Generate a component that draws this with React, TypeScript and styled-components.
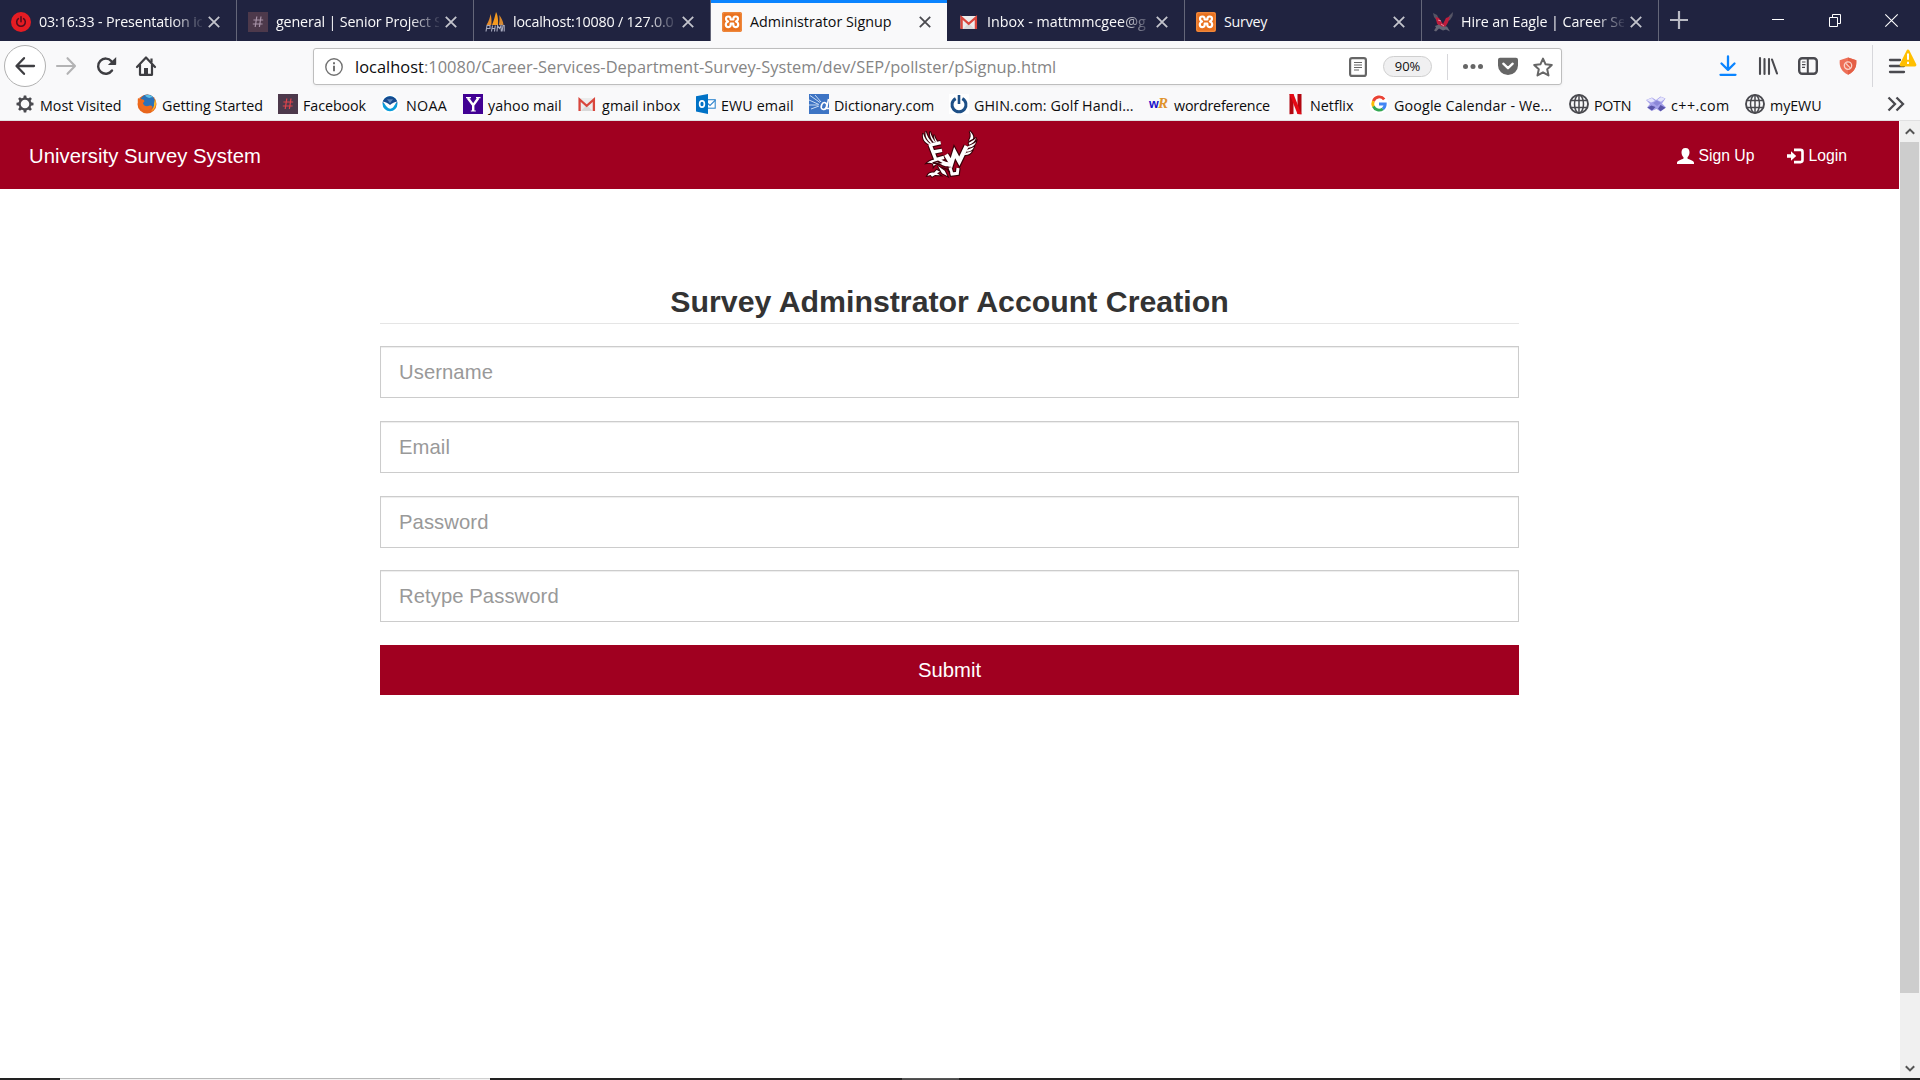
import React from "react";
import styled, { createGlobalStyle, css } from "styled-components";

const GlobalStyle = createGlobalStyle`
  * { box-sizing: border-box; }
  body { margin: 0; background: #fff; overflow: hidden; }
`;

const chromeFont = css`
  font-family: "Open Sans", "Noto Sans", sans-serif;
`;

const Screen = styled.div`
  width: 1920px;
  height: 1080px;
  display: flex;
  flex-direction: column;
  overflow: hidden;
  ${chromeFont}
`;

/* ---------- Tab strip ---------- */

const TabStrip = styled.header`
  height: 41px;
  flex: none;
  display: flex;
  background: #202340;
`;

const TabBox = styled.div<{ $active?: boolean }>`
  width: 237px;
  height: 41px;
  padding: 3px 16px 0 11px;
  display: flex;
  align-items: center;
  border-right: 1px solid ${(p) => (p.$active ? "#202340" : "#646679")};
  background: ${(p) => (p.$active ? "#f9f9fa" : "#202340")};
  color: ${(p) => (p.$active ? "#0c0c0d" : "#f9f9fa")};
  box-shadow: ${(p) => (p.$active ? "inset 0 3px 0 #0a84ff" : "none")};
`;

const TabTitle = styled.span<{ $track: number; $fade?: boolean }>`
  width: 163px;
  margin-left: 8px;
  margin-right: 6px;
  padding-bottom: 1px;
  font-size: 14.3px;
  line-height: 20px;
  letter-spacing: ${(p) => p.$track}px;
  white-space: nowrap;
  mask-image: ${(p) => (p.$fade ? "linear-gradient(to right, #000 134px, transparent 166px)" : "none")};
`;

const Icon = styled.svg`
  flex: none;
  display: block;
  overflow: visible;
`;

const NewTab = styled.div`
  width: 42px;
  padding: 11px 0 0 11px;
`;

const WindowButtons = styled.div`
  margin-left: auto;
  padding: 14px 22px 0 0;
  display: flex;
  gap: 44px;
`;

/* ---------- Navigation toolbar ---------- */

const Toolbar = styled.div`
  height: 50px;
  flex: none;
  display: flex;
  align-items: center;
  background: #f9f9fa;
`;

const BackButton = styled.div`
  width: 42px;
  height: 42px;
  margin-left: 4px;
  border-radius: 50%;
  border: 1px solid #b1b1b1;
  background: #fff;
  display: flex;
  align-items: center;
  justify-content: center;
`;

const NavIcons = styled.div`
  width: 267px;
  padding-left: 10px;
  display: flex;
  gap: 20px;
`;

const AddressBar = styled.div`
  width: 1249px;
  height: 37px;
  margin-top: 1px;
  padding: 0 7px 0 11px;
  display: flex;
  align-items: center;
  background: #fff;
  border: 1px solid #bebebe;
  border-radius: 3px;
  box-shadow: 0 1px 3px rgba(0, 0, 0, 0.06);
`;

const Url = styled.span`
  width: 994px;
  margin-left: 12px;
  font-size: 16.4px;
  line-height: 24px;
  letter-spacing: 0.03px;
  color: #858585;
  white-space: nowrap;
`;

const Host = styled.span`
  color: #0c0c0d;
`;

const ZoomPill = styled.span`
  width: 49px;
  height: 21px;
  margin: 0 15px 0 16px;
  border: 1px solid #cfcfcf;
  border-radius: 11px;
  background: #f0f0f1;
  color: #111;
  font-size: 13px;
  line-height: 19px;
  letter-spacing: -0.1px;
  text-align: center;
`;

const Divider = styled.span<{ $height: number }>`
  width: 1px;
  height: ${(p) => p.$height}px;
  background: #d7d7db;
`;

const PageActions = styled.div`
  margin-left: 15px;
  display: flex;
  align-items: center;
  gap: 15px;
`;

const Tools = styled.div`
  margin-left: 156px;
  padding-right: 14px;
  display: flex;
  gap: 20px;
`;

const MenuButton = styled.div`
  position: relative;
  margin-left: 16px;
`;

const Warning = styled.div`
  position: absolute;
  left: 10px;
  top: -7px;
`;

/* ---------- Bookmarks ---------- */

const Bookmarks = styled.nav`
  height: 30px;
  flex: none;
  padding: 3px 15px 0 15px;
  display: flex;
  background: #f9f9fa;
  border-bottom: 1px solid #e0e0e1;
`;

const Bookmark = styled.div<{ $width: number }>`
  width: ${(p) => p.$width}px;
  flex: none;
  display: flex;
  gap: 5px;
`;

const BookmarkLabel = styled.span<{ $track: number }>`
  font-size: 14.3px;
  line-height: 20px;
  padding-top: 2px;
  letter-spacing: ${(p) => p.$track}px;
  color: #0c0c0d;
  white-space: nowrap;
`;

const Overflow = styled.div`
  margin-left: auto;
`;

/* ---------- Page ---------- */

const Viewport = styled.div`
  flex: 1;
  display: flex;
  min-height: 0;
`;

const Page = styled.main`
  width: 1900px;
  background: #fff;
  font-family: "Liberation Sans", Arial, sans-serif;
`;

const SiteNav = styled.div`
  width: 1899px;
  height: 68px;
  padding: 0 29px;
  display: grid;
  grid-template-columns: 1fr 56px 1fr;
  align-items: center;
  background: #a00020;
  color: #fff;
`;

const Brand = styled.span`
  font-size: 20.25px;
  line-height: 24px;
  letter-spacing: 0.05px;
  padding-top: 2px;
`;

const NavLinks = styled.div`
  display: flex;
  justify-content: flex-end;
  padding: 2px 23px 0 0;
  gap: 33px;
`;

const NavLink = styled.a`
  display: flex;
  align-items: center;
  gap: 4px;
  color: #fff;
  font-size: 15.75px;
  line-height: 20px;
`;

const Form = styled.form`
  width: 1139px;
  margin: 93px 0 0 380px;
  display: flex;
  flex-direction: column;
`;

const Heading = styled.h2`
  margin: 0 0 22px;
  height: 42px;
  border-bottom: 1px solid #e5e5e5;
  font-size: 30.3px;
  line-height: 39px;
  font-weight: 700;
  color: #333;
  text-align: center;
`;

const Field = styled.input<{ $gap: number }>`
  height: 52px;
  margin: 0 0 ${(p) => p.$gap}px;
  padding: 0 18px;
  border: 1px solid #ccc;
  border-radius: 0;
  box-shadow: inset 0 1px 1px rgba(0, 0, 0, 0.075);
  font-family: inherit;
  font-size: 20.25px;
  letter-spacing: 0.07px;
  color: #555;
  outline: none;
  &::placeholder {
    color: #999;
    opacity: 1;
  }
`;

const Submit = styled.button`
  height: 50px;
  padding: 0;
  border: 0;
  background: #a00020;
  color: #fff;
  font-family: inherit;
  font-size: 20.25px;
`;

const Scrollbar = styled.div`
  width: 20px;
  background: #f0f0f0;
  display: flex;
  flex-direction: column;
  align-items: flex-start;
`;

const ScrollArrow = styled.div<{ $height: number }>`
  width: 19px;
  height: ${(p) => p.$height}px;
  display: flex;
  align-items: center;
  justify-content: center;
`;

const Thumb = styled.div`
  width: 19px;
  height: 851px;
  margin-bottom: auto;
  background: #cdcdcd;
`;

const TaskbarEdge = styled.footer`
  height: 2px;
  flex: none;
  display: flex;
  background: #222;
`;

const EdgeSegment = styled.div<{ $width: number; $line: string; $fill: string }>`
  width: ${(p) => p.$width}px;
  height: 2px;
  border-top: 1px solid ${(p) => p.$line};
  background: ${(p) => p.$fill};
`;

/* ---------- Favicons ---------- */

const Favicon = ({ children }: { children: React.ReactNode }) => (
  <Icon width="20" height="20" viewBox="0 0 20 20">{children}</Icon>
);

const PowerFavicon = () => (
  <Favicon>
    <circle cx="10" cy="10" r="10" fill="#e51c23" />
    <path d="M7.400 6.600a4.300 4.300 0 1 0 5.200 0M10 4.800v5" fill="none" stroke="#4d0d1c" strokeWidth="1.500" strokeLinecap="round" />
  </Favicon>
);

const HashFavicon = ({ color }: { color: string }) => (
  <Favicon>
    <rect width="20" height="20" fill="#4d394b" />
    <path d="M8.800 4.500 7.200 15M13 4.500 11.400 15M5.400 8h9.800M4.800 12h9.800" stroke={color} strokeWidth="1.200" fill="none" />
  </Favicon>
);

const PhpMyAdminFavicon = () => (
  <Favicon>
    <path d="M1.500 13C4 9 5 5 5.500 2c1 3 1.300 7 .8 11z" fill="#e78d2d" />
    <path d="M7 13C9 8 10 4 11 0c2 3 2.300 9 2 13z" fill="#f59a1f" />
    <path d="M13.800 13c.8-3 .8-6 .5-10 2 3 4 6 4.200 10z" fill="#d6882f" />
    <path d="M1 19.500l1-6h3v3H2M6.500 19.500l1-6M9.500 19.500l.8-6M7 16.500h3M12 19.500l.5-6 2 3 1.500-3 .3 6M17 19.500l1-6h1.200v6" fill="none" stroke="#a9acc0" strokeWidth="1.100" />
  </Favicon>
);

const XamppFavicon = () => (
  <Favicon>
    <rect width="20" height="20" rx="2" fill="#e9701d" />
    <rect x=".8" y=".8" width="18.400" height="18.400" rx="1.500" fill="none" stroke="#f39a55" strokeWidth=".8" />
    <path d="M6.300 4.500c-3 0-3 4-.2 5-3.200 1.200-3 5.700.2 5.700 2.300 0 2.500-2 2.400-3.500h2.600c-.1 1.500.1 3.500 2.400 3.500 3.200 0 3.400-4.500.2-5.700 2.800-1 2.800-5-.2-5-2 0-2.400 1.300-2.300 3H8.600c.1-1.700-.3-3-2.300-3z" fill="none" stroke="#fff" strokeWidth="2.200" strokeLinejoin="round" />
  </Favicon>
);

const GmailFavicon = () => (
  <Favicon>
    <rect x="1.500" y="4" width="16.500" height="13" rx="1" fill="#ececec" />
    <path d="M4 17l5.700-6 5.800 6z" fill="#d9d9d9" />
    <path d="M2.600 17V5.500l7.100 6.300 7.200-6.300V17" fill="none" stroke="#d9463c" strokeWidth="2.300" />
  </Favicon>
);

const EagleFavicon = () => (
  <Favicon>
    <path d="M0 1l4 2 3 6-3 0-3-4zM20 0l-4 4-3 6 4-2 2.500-4z" fill="#555565" />
    <path d="M2.500 5l3.500 1 4 6 3-6 4-1.500-2 6-3 5-5 0-3-4z" fill="#c01c3c" />
    <path d="M2 14l4-1.500 3 2 5 0 3 5-4-2-3 1-4-2-3 3-2-1 2-3z" fill="#666675" />
    <path d="M5 8l3 1M8 12l3 2" stroke="#e8b0bb" strokeWidth=".8" />
  </Favicon>
);

const GearIcon = () => (
  <Favicon>
    <circle cx="10" cy="10" r="5.400" fill="none" stroke="#4a4a4f" strokeWidth="2.200" />
    {[0, 45, 90, 135, 180, 225, 270, 315].map((a) => (
      <path key={a} d="M8.800 1.500h2.400l.6 3H8.200z" fill="#4a4a4f" transform={`rotate(${a} 10 10)`} />
    ))}
  </Favicon>
);

const FirefoxFavicon = () => (
  <Favicon>
    <circle cx="10" cy="10" r="9.500" fill="#e8661c" />
    <circle cx="10.500" cy="8" r="7.600" fill="#2a72b8" />
    <path d="M8 1.500c4-1 7 0 8.500 2-2-.5-3 .5-4 .5S9 3 8 1.500z" fill="#5fc0e8" />
    <path d="M1 4c1 .8 2.500 1 4 1.200 1.500.4 2.800 1 2.300 2.300-.6 1.200-1.500 1-1.200 2.300 1 2.500 4 3 5.900 2 2-.8 4 .2 3 1.700-2 3-6 3.500-9 2C2 13.500 0 9 1 4z" fill="#ee6a1c" />
    <path d="M18 5c2 5 .5 10-4 12.600 2-2 3.400-5 3-8z" fill="#fbc02d" />
  </Favicon>
);

const NoaaFavicon = () => (
  <Favicon>
    <circle cx="9" cy="10" r="9.300" fill="#fff" />
    <circle cx="9" cy="9.800" r="7.500" fill="#0b9ddb" />
    <path d="M1.600 8.500a7.500 7.500 0 0 1 14.800 0L9 14z" fill="#174a8f" />
    <path d="M1.500 7.500c3 .2 5.500 1.800 7.500 3.500 2-1.700 4.500-3.300 7.500-3.500-2.500 1.700-3.500 6.800-7 7.200-3.500 0-5.500-5-8-7.200z" fill="#fff" />
    <path d="M6 5.200h6l-3 4z" fill="#5d86bb" />
  </Favicon>
);

const YahooFavicon = () => (
  <Favicon>
    <rect width="20" height="20" fill="#410093" />
    <path d="M4.800 4l5.400 7.300L15.400 4M10.200 11v6" stroke="#fff" strokeWidth="2.400" fill="none" />
    <path d="M3 3.700h5M13 3.700h4.500M7.800 17h5" stroke="#fff" strokeWidth="1.200" />
  </Favicon>
);

const OutlookFavicon = () => (
  <Favicon>
    <rect x="9.500" y="5.700" width="9.700" height="8.500" fill="#fff" stroke="#3589cf" strokeWidth="1.100" />
    <path d="M10 8l4 3.500L19.500 6" fill="none" stroke="#3589cf" strokeWidth="1.100" />
    <path d="M0 2.200 12 0v20L0 17.600z" fill="#0072c6" />
    <ellipse cx="6" cy="10" rx="2.400" ry="3.100" fill="none" stroke="#fff" strokeWidth="1.600" />
  </Favicon>
);

const DictionaryFavicon = () => (
  <Favicon>
    <rect width="20" height="20" fill="#3d74c4" />
    <path d="M1 1.500l10 7M6 1l6 7M0 6l10 4.500M0 11h9M2 15l8-3" stroke="#c9dcf5" strokeWidth="1" fill="none" />
    <ellipse cx="15" cy="12" rx="2.600" ry="3.500" transform="rotate(20 15 12)" stroke="#fff" strokeWidth="1.600" fill="none" />
    <path d="M19.500 5l-2 9.500h2.500" stroke="#fff" strokeWidth="1.500" fill="none" />
  </Favicon>
);

const GhinFavicon = () => (
  <Favicon>
    <rect width="20" height="20" fill="#fff" />
    <path d="M6.700 4.600a7 7 0 1 0 6.600 0" fill="none" stroke="#1d4f86" strokeWidth="3" />
    <path d="M10 1v9" stroke="#1d4f86" strokeWidth="2.600" />
  </Favicon>
);

const WordReferenceFavicon = () => (
  <Favicon>
    <text x="0" y="14" fontFamily="Liberation Sans" fontWeight="700" fontSize="12.500" fill="#1a12c9">w</text>
    <text x="9" y="14" fontFamily="Liberation Serif" fontStyle="italic" fontWeight="700" fontSize="15" fill="#e0932b">R</text>
  </Favicon>
);

const NetflixFavicon = () => (
  <Favicon>
    <path d="M4.500 0h4v20l-4 .3zM12.500 0h4v20.300l-4-.3z" fill="#b20710" />
    <path d="M4.500 0h4l8 20.300-4-.3z" fill="#e50914" />
  </Favicon>
);

const GoogleFavicon = () => (
  <Favicon>
    <circle cx="10" cy="10" r="9.500" fill="#fff" />
    <g fill="none" strokeWidth="2.900">
      <path d="M15.200 5.300A6.200 6.200 0 0 0 4.400 7.300" stroke="#ea4335" />
      <path d="M4.400 7.200a6.200 6.200 0 0 0 0 5.300" stroke="#fbbc05" />
      <path d="M4.400 12.400a6.200 6.200 0 0 0 9.500 2.400" stroke="#34a853" />
      <path d="M10 10h6.200c0 2-.8 3.800-2.400 5" stroke="#4285f4" />
    </g>
  </Favicon>
);

const GlobeIcon = () => (
  <Favicon>
    <g fill="none" stroke="#4a4a4f">
      <circle cx="10" cy="10" r="9" strokeWidth="1.900" />
      <ellipse cx="10" cy="10" rx="4.500" ry="9" strokeWidth="1.500" />
      <path d="M10 1v18M1.800 6.500h16.400M1.800 13.500h16.400" strokeWidth="1.500" />
    </g>
  </Favicon>
);

const CppFavicon = () => (
  <Favicon>
    <path d="M0 6l6-2.500 4 2.500 4.500-3.500 5 2-3.500 5 4 4-5.500 4-4-2.500-5 2-4.500-3.500 3-3.500z" fill="#a5a0ea" />
    <path d="M.5 6l5.500-2L9 7 5 8.500zM11 6l4-3 4 1.700-4 3z" fill="#e6e6fc" />
    <path d="M1.500 13.500l4-2 4 1.500-3.500 3.500zM14.500 11l5 2.700-5 3.600-2.500-2.600z" fill="#5a55a8" />
    <path d="M7 9l4-2.500 4 2.500-4 3z" fill="#8c88d8" />
  </Favicon>
);

/* ---------- Browser glyphs ---------- */

const CloseGlyph = ({ color }: { color: string }) => (
  <Icon width="12" height="12" viewBox="0 0 12 12">
    <path d="M.8.8l10.400 10.400M11.200.8.8 11.200" stroke={color} strokeWidth="1.800" />
  </Icon>
);

const eagleStrokes = [
  { d: "M20 46 56 38M25 46 42 90M34 66 60 61M42 89 66 82", w: 10 },
  { d: "M72 74 88 100 98 68 112 94 134 48", w: 13 },
  { d: "M84 112 90 132 106 130 108 114", w: 9 },
];

const eagleShapes =
  "M3 10C1 25 6 36 18 42l6-1C13 33 8 24 3 10z" +
  "M11 4c-2 14 2 24 14 35l6-1C21 28 15 18 11 4z" +
  "M24 5c-1 13 3 23 11 32l5-1C33 27 28 18 24 5z" +
  "M36 14c0 8 2 15 5 22l5-1c-5-7-8-13-10-21z" +
  "M143 3c5 12 4 20-3 30l13-7c3-6-2-16-10-23z" +
  "M162 22c-4 10-14 11-22 17l2 5c10-4 18-10 20-22z" +
  "M162 36c-6 6-15 8-24 13l1 5c11-3 20-7 23-18z" +
  "M156 50c-6 5-14 6-22 10l-1 5c11 0 20-5 23-15z" +
  "M150 64c-8 3-14 3-22 7l-2 4c11 1 20-3 24-11z" +
  "M15 99c9-9 24-13 39-11 9 2 13 8 25 9 8 2 9 9 7 14-10-2-14 0-24-5-12-8-22-4-27 3 0-10-8-12-20-10z" +
  "M16 137c4-8 12-10 20-9l8-8 10 5-9 5 9 6-15-1-9 5-4-5z" +
  "M48 108l20 14 8 16-16-8z";

const ScreamingEagle = () => (
  <Icon width="56" height="50" viewBox="0 0 168 150">
    <g stroke="#3a0009" fill="none">
      {eagleStrokes.map((s) => (
        <path key={s.d} d={s.d} strokeWidth={s.w + 7} />
      ))}
      <path d={eagleShapes} strokeWidth="6" />
    </g>
    <g stroke="#fff" fill="none">
      {eagleStrokes.map((s) => (
        <path key={s.d} d={s.d} strokeWidth={s.w} />
      ))}
    </g>
    <path d={eagleShapes} fill="#fff" />
    <path d="M32 99l16-5 8 4-12 3zM58 112l18 6 8 10" fill="none" stroke="#3a0009" strokeWidth="4" />
  </Icon>
);

type Tab = { icon: React.ReactNode; title: string; track: number; fade?: boolean; active?: boolean };

const tabs: Tab[] = [
  { icon: <PowerFavicon />, title: "03:16:33 - Presentation ic", track: -0.14, fade: true },
  { icon: <HashFavicon color="#a893a8" />, title: "general | Senior Project S", track: -0.15, fade: true },
  { icon: <PhpMyAdminFavicon />, title: "localhost:10080 / 127.0.0", track: -0.2, fade: true },
  { icon: <XamppFavicon />, title: "Administrator Signup", track: 0, active: true },
  { icon: <GmailFavicon />, title: "Inbox - mattmmcgee@g", track: 0, fade: true },
  { icon: <XamppFavicon />, title: "Survey", track: -0.25 },
  { icon: <EagleFavicon />, title: "Hire an Eagle | Career Se", track: -0.08, fade: true },
];

type Mark = { icon: React.ReactNode; label: string; width: number; track: number };

const bookmarks: Mark[] = [
  { icon: <GearIcon />, label: "Most Visited", width: 122, track: 0 },
  { icon: <FirefoxFavicon />, label: "Getting Started", width: 141, track: 0 },
  { icon: <HashFavicon color="#e0444c" />, label: "Facebook", width: 103, track: -0.08 },
  { icon: <NoaaFavicon />, label: "NOAA", width: 82, track: 0.3 },
  { icon: <YahooFavicon />, label: "yahoo mail", width: 114, track: 0.05 },
  { icon: <GmailFavicon />, label: "gmail inbox", width: 119, track: 0.12 },
  { icon: <OutlookFavicon />, label: "EWU email", width: 113, track: 0.1 },
  { icon: <DictionaryFavicon />, label: "Dictionary.com", width: 140, track: 0 },
  { icon: <GhinFavicon />, label: "GHIN.com: Golf Handi...", width: 200, track: 0.09 },
  { icon: <WordReferenceFavicon />, label: "wordreference", width: 136, track: -0.2 },
  { icon: <NetflixFavicon />, label: "Netflix", width: 84, track: 0 },
  { icon: <GoogleFavicon />, label: "Google Calendar - We...", width: 200, track: 0.13 },
  { icon: <GlobeIcon />, label: "POTN", width: 77, track: -0.3 },
  { icon: <CppFavicon />, label: "c++.com", width: 99, track: 0.45 },
  { icon: <GlobeIcon />, label: "myEWU", width: 90, track: -0.1 },
];

const fields = [
  { name: "username", label: "Username", gap: 23 },
  { name: "email", label: "Email", gap: 23 },
  { name: "password", label: "Password", gap: 22 },
  { name: "confirm", label: "Retype Password", gap: 23 },
];

export default function App() {
  return (
    <Screen>
      <GlobalStyle />
      <TabStrip>
        {tabs.map((t) => (
          <TabBox key={t.title} $active={t.active}>
            {t.icon}
            <TabTitle $track={t.track} $fade={t.fade}>{t.title}</TabTitle>
            <CloseGlyph color={t.active ? "#4a4a4f" : "#c3c4cc"} />
          </TabBox>
        ))}
        <NewTab>
          <Icon width="18" height="18" viewBox="0 0 18 18">
            <path d="M9 0v18M0 9h18" stroke="#b9bac4" strokeWidth="2.200" />
          </Icon>
        </NewTab>
        <WindowButtons>
          <Icon width="13" height="13" viewBox="0 0 13 13">
            <path d="M0 5.500h12" stroke="#fff" />
          </Icon>
          <Icon width="12" height="13" viewBox="0 0 12 13">
            <path d="M.5 3.500h8v9h-8zM3.500 3.500v-3h8v9h-3" fill="none" stroke="#fff" />
          </Icon>
          <Icon width="13" height="13" viewBox="0 0 13 13">
            <path d="M.3.300l12.400 12.400M12.700.300.300 12.700" stroke="#fff" strokeWidth="1.100" />
          </Icon>
        </WindowButtons>
      </TabStrip>

      <Toolbar>
        <BackButton>
          <Icon width="20" height="18" viewBox="0 0 20 18">
            <path d="M9 1.200 1.500 9 9 16.800M2 9h17" fill="none" stroke="#3e3e42" strokeWidth="2.300" strokeLinecap="round" strokeLinejoin="round" />
          </Icon>
        </BackButton>
        <NavIcons>
          <Icon width="20" height="20" viewBox="0 0 20 20">
            <path d="M11.500 2.200 19 10l-7.500 7.800M18.500 10H1" fill="none" stroke="#b3b3b4" strokeWidth="2.100" strokeLinecap="round" strokeLinejoin="round" />
          </Icon>
          <Icon width="20" height="20" viewBox="0 0 20 20">
            <path d="M16 14.500A7.600 7.600 0 1 1 15.500 5.200" fill="none" stroke="#3e3e42" strokeWidth="2.400" strokeLinecap="round" />
            <path d="M20.200 1v7.200a.8.800 0 0 1-.8.800h-7.500z" fill="#3e3e42" />
          </Icon>
          <Icon width="20" height="20" viewBox="0 0 20 20">
            <path d="M1 11l9-9.500 9 9.500M4 9v9.800h12V9" fill="none" stroke="#3e3e42" strokeWidth="2.200" strokeLinejoin="round" strokeLinecap="round" />
            <path d="M15.500 2.500v4" stroke="#3e3e42" strokeWidth="2.200" />
            <path d="M8 18.500V12h4v6.500z" fill="#3e3e42" />
          </Icon>
        </NavIcons>
        <AddressBar>
          <Icon width="18" height="18" viewBox="0 0 18 18">
            <circle cx="9" cy="9" r="8.200" fill="none" stroke="#727272" strokeWidth="1.400" />
            <path d="M9 7.800v5.400M9 4.200v2" stroke="#727272" strokeWidth="2" />
          </Icon>
          <Url>
            <Host>localhost</Host>:10080/Career-Services-Department-Survey-System/dev/SEP/pollster/pSignup.html
          </Url>
          <Icon width="18" height="20" viewBox="0 0 18 20">
            <rect x="1.100" y="1.100" width="15.800" height="17.800" rx="2" fill="none" stroke="#666" strokeWidth="2.200" />
            <path d="M5 5.500h8M5 8h8M5 10.500h8M5 13h5" stroke="#666" strokeWidth="1.200" />
          </Icon>
          <ZoomPill>90%</ZoomPill>
          <Divider $height={26} />
          <PageActions>
            <Icon width="20" height="20" viewBox="0 0 20 20">
              <circle cx="2.500" cy="9.500" r="2.500" fill="#666" />
              <circle cx="10" cy="9.500" r="2.500" fill="#666" />
              <circle cx="17.500" cy="9.500" r="2.500" fill="#666" />
            </Icon>
            <Icon width="20" height="20" viewBox="0 0 20 20">
              <path d="M2 .7h16a2 2 0 0 1 2 2V8.500a10 9.500 0 0 1-20 0V2.700a2 2 0 0 1 2-2z" fill="#666" />
              <path d="M5.300 6.700 10 11.200l4.700-4.500" fill="none" stroke="#fff" strokeWidth="2.300" strokeLinecap="round" strokeLinejoin="round" />
            </Icon>
            <Icon width="20" height="20" viewBox="0 0 20 20">
              <path d="M10 1.600l2.600 5.700 6.200.7-4.600 4.200 1.300 6.200-5.500-3.100-5.500 3.100 1.300-6.200L1.200 8l6.200-.7z" fill="none" stroke="#666" strokeWidth="2" strokeLinejoin="round" />
            </Icon>
          </PageActions>
        </AddressBar>
        <Tools>
          <Icon width="20" height="20" viewBox="0 0 20 20">
            <path d="M10 .500v13M3.500 7.500 10 13.800l6.500-6.300M2.500 18.800h15" fill="none" stroke="#0a84ff" strokeWidth="2.300" strokeLinecap="round" strokeLinejoin="round" />
          </Icon>
          <Icon width="20" height="20" viewBox="0 0 20 20">
            <path d="M2 2v16M6.500 3v15M11 3v15M14 3.500 19 17.500" fill="none" stroke="#4a4a4f" strokeWidth="2.100" strokeLinecap="round" />
          </Icon>
          <Icon width="20" height="20" viewBox="0 0 20 20">
            <rect x="1.200" y="2.200" width="17.600" height="15.600" rx="3" fill="none" stroke="#4a4a4f" strokeWidth="2.400" />
            <path d="M9.800 2v16" stroke="#4a4a4f" strokeWidth="2" />
            <path d="M4 6h3.500M4 8.700h3.500M4 11.400h3" stroke="#4a4a4f" strokeWidth="1.200" />
          </Icon>
          <Icon width="20" height="20" viewBox="0 0 20 20">
            <path d="M10 1.500l8.300 2.700c.4 7-1.600 11-8.300 14.500C3.300 15.200 1.300 11.200 1.700 4.200z" fill="#ee7058" />
            <path d="M10 1.500l8.300 2.700c.4 7-1.600 11-8.300 14.500z" fill="#e45f45" />
            <circle cx="10" cy="9.600" r="3.700" fill="none" stroke="#f9d2c8" strokeWidth="1.300" />
            <path d="M7.500 7.100l5 5" stroke="#f9d2c8" strokeWidth="1.300" />
          </Icon>
        </Tools>
        <Divider $height={42} />
        <MenuButton>
          <Icon width="16" height="20" viewBox="0 0 16 20">
            <path d="M1 4h10M1 10h14M1 16h14" stroke="#4a4a4f" strokeWidth="2.300" strokeLinecap="round" />
          </Icon>
          <Warning>
            <Icon width="18" height="18" viewBox="0 0 18 18">
              <path d="M9 2l7 14H2z" fill="#ffbf00" stroke="#ffbf00" strokeWidth="2.800" strokeLinejoin="round" />
              <path d="M9 4.500v6.300M9 12.800v2.200" stroke="#fff" strokeWidth="2" />
            </Icon>
          </Warning>
        </MenuButton>
      </Toolbar>

      <Bookmarks>
        {bookmarks.map((b) => (
          <Bookmark key={b.label} $width={b.width}>
            {b.icon}
            <BookmarkLabel $track={b.track}>{b.label}</BookmarkLabel>
          </Bookmark>
        ))}
        <Overflow>
          <Icon width="18" height="20" viewBox="0 0 18 20">
            <path d="M1.500 3.500 8 10l-6.500 6.500M9.500 3.500 16 10l-6.500 6.500" fill="none" stroke="#4a4a4f" strokeWidth="2.300" />
          </Icon>
        </Overflow>
      </Bookmarks>

      <Viewport>
        <Page>
          <SiteNav>
            <Brand>University Survey System</Brand>
            <ScreamingEagle />
            <NavLinks>
              <NavLink>
                <Icon width="17" height="16" viewBox="0 0 17 16">
                  <path d="M8.500 0c3 0 4 2 4 4.300 0 2-.7 3.800-2 5v1.200c1.500 1 6.500 2 6.500 4.300V16H0v-1.200c0-2.300 5-3.300 6.500-4.300V9.300c-1.300-1.200-2-3-2-5C4.500 2 5.500 0 8.500 0z" fill="#fff" />
                </Icon>
                Sign Up
              </NavLink>
              <NavLink>
                <Icon width="17" height="16" viewBox="0 0 17 16">
                  <path d="M7 1.900h6.500a2 2 0 0 1 2 2v8.200a2 2 0 0 1-2 2H7" fill="none" stroke="#fff" strokeWidth="2.600" />
                  <path d="M0 6.200h4V3.200L9.200 8 4 12.800V9.800H0z" fill="#fff" />
                </Icon>
                Login
              </NavLink>
            </NavLinks>
          </SiteNav>
          <Form>
            <Heading>Survey Adminstrator Account Creation</Heading>
            {fields.map((f) => (
              <Field key={f.name} name={f.name} placeholder={f.label} $gap={f.gap} />
            ))}
            <Submit type="button">Submit</Submit>
          </Form>
        </Page>
        <Scrollbar>
          <ScrollArrow $height={21}>
            <Icon width="10" height="7" viewBox="0 0 10 7">
              <path d="M.8 5.800 5 1.600l4.200 4.200" fill="none" stroke="#555" strokeWidth="2" />
            </Icon>
          </ScrollArrow>
          <Thumb />
          <ScrollArrow $height={19}>
            <Icon width="10" height="7" viewBox="0 0 10 7">
              <path d="M.8 1.200 5 5.400l4.200-4.200" fill="none" stroke="#555" strokeWidth="2" />
            </Icon>
          </ScrollArrow>
        </Scrollbar>
      </Viewport>

      <TaskbarEdge>
        <EdgeSegment $width={60} $line="#222" $fill="#222" />
        <EdgeSegment $width={380} $line="#b8b8b8" $fill="#f2f2f2" />
        <EdgeSegment $width={50} $line="#d0d0d0" $fill="#f2f2f2" />
        <EdgeSegment $width={412} $line="#222" $fill="#222" />
        <EdgeSegment $width={57} $line="#555" $fill="#4a4a4a" />
      </TaskbarEdge>
    </Screen>
  );
}
